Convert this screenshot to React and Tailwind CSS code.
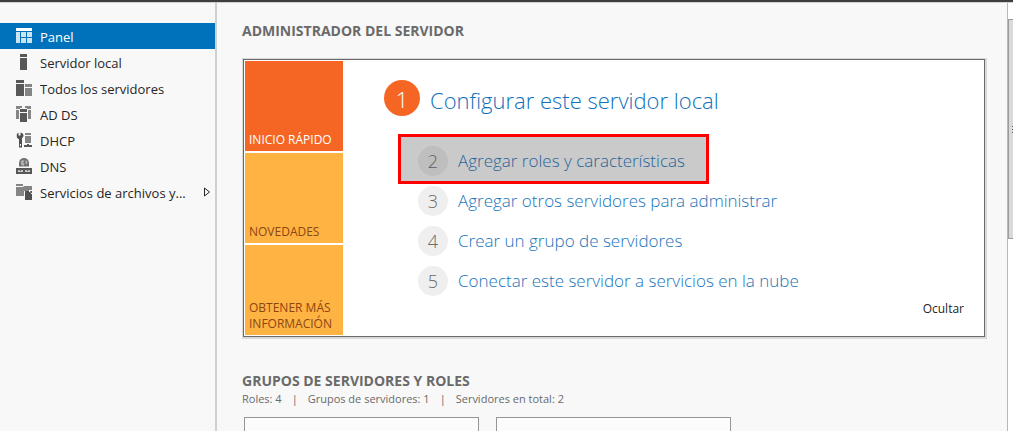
const DashboardIcon = () => (
  <svg width="16" height="16" viewBox="0 0 16 16" shapeRendering="crispEdges" aria-hidden="true">
    <rect width="16" height="3" fill="#ffffff" />
    <path d="M0 4h4v11H0zM5 4h5v5H5zM11 4h5v5h-5zM5 10h5v5H5zM11 10h5v5h-5z" fill="#cce3f2" />
  </svg>
);

const ServerIcon = () => (
  <svg width="16" height="16" viewBox="0 0 16 16" shapeRendering="crispEdges" aria-hidden="true">
    <path d="M4 0h7v3H4zM4 4h7v12H4z" fill="#585858" />
  </svg>
);

const ServersIcon = () => (
  <svg width="16" height="16" viewBox="0 0 16 16" shapeRendering="crispEdges" aria-hidden="true">
    <path d="M0 0h8v3H0zM0 4h8v12H0z" fill="#585858" />
    <path d="M9 4h7v3H9zM9 8h7v8H9z" fill="#858585" />
  </svg>
);

const DomainIcon = () => (
  <svg width="16" height="16" viewBox="0 0 16 16" shapeRendering="crispEdges" aria-hidden="true">
    <path d="M0 0h6v2H4v1H0zM9 0h6v3h-4V2H9zM0 4h3v9H0zM12 4h3v9h-3z" fill="#858585" />
    <path d="M4 3h7v3H4zM4 7h7v9H4z" fill="#585858" />
  </svg>
);

const DhcpIcon = () => (
  <svg width="16" height="16" viewBox="0 0 16 16" aria-hidden="true">
    <path d="M2.5 .5v3h2v-3C6.300.800 7.500 2 7.500 3.500c0 1.200-.700 2.100-1.500 2.600V15.500H3V7C1.700 6.700.800 5.800.800 4.500V2z" fill="#505050" />
    <path d="M4 12h1v2H4z" fill="#f8f8f8" />
    <path d="M9 1h6v2H9zM9 4h6v7H9z" fill="#858585" />
    <path d="M11 12h2v1h3v2H8v-2h3z" fill="#585858" />
  </svg>
);

const DnsIcon = () => (
  <svg width="16" height="16" viewBox="0 0 16 16" aria-hidden="true">
    <path d="M3 8.500V5a5 5 0 0 1 10 0v3.500z" fill="#707070" />
    <path d="M4.500 4l2-2 2 .800-1.500 2 1.500 1-1 2.200-2-1zM9.500 2l2 1.500-.500 3-1.500-1z" fill="#b4b4b4" />
    <path d="M0 10h16v6H0z" fill="#585858" />
    <path d="M2 12h5v2H2zM9 12h5v2H9z" fill="#c4c4c4" />
    <path d="M4 12h1v1H4zM11 12h1v1h-1z" fill="#585858" />
  </svg>
);

const FilesIcon = () => (
  <svg width="16" height="16" viewBox="0 0 16 16" aria-hidden="true">
    <path d="M0 0h7v2H0zM0 3h7l1-1h8v5H8v5H0z" fill="#858585" />
    <path d="M9 7h4l3 3v6H9z" fill="#505050" />
    <path d="M13 6h3v4h-1V8h-2z" fill="#f8f8f8" />
    <path d="M14 7h2v2h-1z" fill="#505050" />
  </svg>
);

const navItems = [
  { label: "Panel", Icon: DashboardIcon, selected: true },
  { label: "Servidor local", Icon: ServerIcon },
  { label: "Todos los servidores", Icon: ServersIcon },
  { label: "AD DS", Icon: DomainIcon },
  { label: "DHCP", Icon: DhcpIcon },
  { label: "DNS", Icon: DnsIcon },
  { label: "Servicios de archivos y...", Icon: FilesIcon, expandable: true },
];

const steps = [
  { number: 2, label: "Agregar roles y características", marked: true },
  { number: 3, label: "Agregar otros servidores para administrar" },
  { number: 4, label: "Crear un grupo de servidores" },
  { number: 5, label: "Conectar este servidor a servicios en la nube" },
];

function Sidebar() {
  return (
    <nav className="w-[217px] shrink-0 border-r-2 border-[#cfcfcf] pt-5">
      <ul>
        {navItems.map(({ label, Icon, selected, expandable }) => (
          <li key={label}>
            <button
              type="button"
              aria-current={selected ? "page" : undefined}
              className={
                selected
                  ? "flex h-[26px] w-full items-center gap-2 bg-[#0072bc] pl-4 pr-1 text-left text-[13px] text-white"
                  : "flex h-[26px] w-full items-center gap-2 pl-4 pr-1 text-left text-[13px] text-[#262626]"
              }
            >
              <Icon />
              <span className="flex-1 whitespace-nowrap pt-0.5 leading-5">{label}</span>
              {expandable && (
                <svg width="8" height="10" viewBox="0 0 8 10" aria-hidden="true">
                  <path d="M1.500 1v8L6.500 5z" fill="none" stroke="#262626" />
                </svg>
              )}
            </button>
          </li>
        ))}
      </ul>
    </nav>
  );
}

function Tiles() {
  return (
    <div className="flex w-[98px] shrink-0 flex-col gap-0.5 text-xs leading-4">
      <button type="button" className="flex h-[90px] items-end bg-[#f56523] px-1 pb-[3px] text-left text-white">
        INICIO RÁPIDO
      </button>
      <button type="button" className="flex h-[90px] items-end bg-[#ffb343] px-1 pb-[3px] text-left text-[#8c4613]">
        NOVEDADES
      </button>
      <button type="button" className="flex h-[90px] items-end bg-[#ffb343] px-1 pb-[3px] text-left text-[#8c4613]">
        OBTENER MÁS INFORMACIÓN
      </button>
    </div>
  );
}

function Welcome() {
  return (
    <section className="border border-b-2 border-r-2 border-[#d9d9d9]">
      <div className="flex border border-[#6a6a6a] bg-white p-px">
        <Tiles />
        <div className="flex flex-1 flex-col pl-[41px] pt-[19px]">
          <a href="#configurar" className="flex items-center gap-2.5 font-light text-[#0f70bb]">
            <span className="flex size-9 items-center justify-center rounded-full bg-[#f56523] pt-0.5 text-[22px] text-white">
              1
            </span>
            <span className="whitespace-nowrap pt-1 text-[22px] leading-8">Configurar este servidor local</span>
          </a>
          <ol className="flex flex-col items-start gap-2.5 pl-[34px] pt-[30px]">
            {steps.map(({ number, label, marked }) => (
              <li key={number} className="relative">
                <a href={"#paso-" + number} className="flex items-center gap-2.5 text-[17px] font-light text-[#1874bc]">
                  <span className="flex size-[30px] items-center justify-center rounded-full bg-[#efefef] text-lg text-[#6a6a6a]">
                    {number}
                  </span>
                  <span className="whitespace-nowrap leading-[30px]">{label}</span>
                </a>
                {marked && (
                  <span className="pointer-events-none absolute -bottom-2 -left-5 -right-6 -top-3 border-[3px] border-[#ff0000] bg-[#3c3c40]/27" />
                )}
              </li>
            ))}
          </ol>
        </div>
        <button type="button" className="mb-[18px] mr-[19px] self-end text-xs leading-4 text-[#262626]">
          Ocultar
        </button>
      </div>
    </section>
  );
}

function Scrollbar() {
  return (
    <div className="w-1.5 shrink-0 border-l border-[#b8b8b8] bg-white" aria-hidden="true">
      <div className="h-4" />
      <div className="flex h-[220px] items-center justify-end border-y border-l border-[#9c9c9c] bg-[#d9d9d9]">
        <div className="flex flex-col gap-0.5">
          <div className="h-px w-px bg-[#606060]" />
          <div className="h-px w-px bg-[#606060]" />
          <div className="h-px w-px bg-[#606060]" />
        </div>
      </div>
    </div>
  );
}

export default function App() {
  return (
    <div className="flex h-screen flex-col overflow-hidden border-t-2 border-[#3f3d3d] bg-[#f8f8f8] font-['Open_Sans','Noto_Sans',sans-serif]">
      <div className="h-px shrink-0 bg-[#d0d0d0]" />
      <div className="flex min-h-0 flex-1">
        <Sidebar />
        <main className="flex min-w-0 flex-1 flex-col pl-[25px] pr-5 pt-[18px]">
          <h1 className="pb-[17px] text-sm font-bold text-[#6a6a6a]">ADMINISTRADOR DEL SERVIDOR</h1>
          <Welcome />
          <h2 className="pt-8 text-sm font-bold text-[#6a6a6a]">GRUPOS DE SERVIDORES Y ROLES</h2>
          <p className="flex gap-2.5 text-[11px] leading-4 text-[#6a6a6a]">
            <span>Roles: 4</span>
            <span>|</span>
            <span>Grupos de servidores: 1</span>
            <span>|</span>
            <span>Servidores en total: 2</span>
          </p>
          <div className="flex min-h-0 flex-1 gap-[17px] pl-0.5 pt-2.5">
            <div className="w-[235px] border border-b-0 border-[#969696] bg-[#fcfcfc]" />
            <div className="w-[235px] border border-b-0 border-[#969696] bg-[#fcfcfc]" />
          </div>
        </main>
        <Scrollbar />
      </div>
    </div>
  );
}
